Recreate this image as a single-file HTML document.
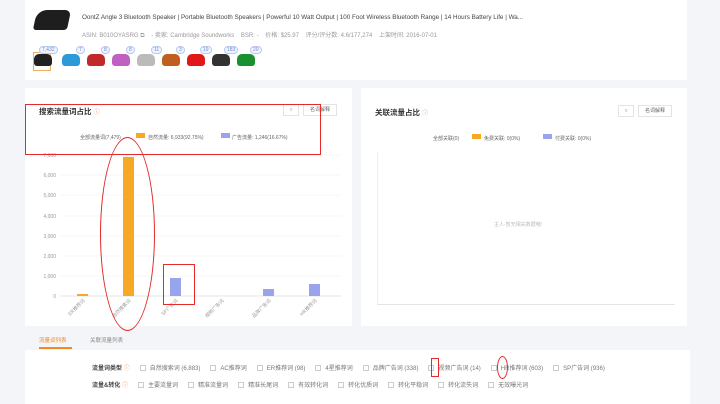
<!DOCTYPE html>
<html><head><meta charset="utf-8"><style>
*{margin:0;padding:0;box-sizing:border-box}
body{width:720px;height:404px;background:#f4f5f8;font-family:"Liberation Sans","Noto Sans CJK SC",sans-serif;position:relative;overflow:hidden;color:#333}
.abs{position:absolute}
.card{position:absolute;background:#fff}
.t{font-size:5px;color:#999;white-space:nowrap;position:absolute}
.thumb{position:absolute;top:54px;width:18px;height:12px;border-radius:5px 5px 3px 3px}
.badge{position:absolute;top:46px;height:8px;border:1px solid #b8c8f0;border-radius:4px;font-size:5px;color:#6f8ad8;background:#f0f4ff;padding:0 2px;line-height:6px}
.btn{position:absolute;border:1px solid #e4e4e4;background:#fff;font-size:5px;color:#666;text-align:center}
.cb{display:inline-block;width:6px;height:6px;border:1px solid #ccc;vertical-align:middle;margin:0 4px 0 10px}
.row{position:absolute;font-size:6px;color:#777;white-space:nowrap}
.red{position:absolute;border:1.5px solid #e52a2a}
.ov{position:absolute;border:1.2px solid #e52a2a;border-radius:50%}
</style></head><body>
<div class="card" style="left:25px;top:0;width:662px;height:80px"></div>
<div class="abs" style="left:35px;top:10px;width:34px;height:20px;background:#1e1e1e;border-radius:10px 6px 3px 3px;transform:skewX(-12deg)"></div>
<div class="t" style="left:82px;top:14px;color:#444;font-size:6.3px">OontZ Angle 3 Bluetooth Speaker | Portable Bluetooth Speakers | Powerful 10 Watt Output | 100 Foot Wireless Bluetooth Range | 14 Hours Battery Life | Wa...</div>
<div class="t" style="left:82px;top:30px;font-size:6px">ASIN: B010OYASRG ⧉ &nbsp;&nbsp; - 卖家: Cambridge Soundworks &nbsp;&nbsp; BSR: - &nbsp;&nbsp; 价格: $25.97 &nbsp;&nbsp; 评分/评分数: 4.6/177,274 &nbsp;&nbsp; 上架时间: 2016-07-01</div>
<div class="abs" style="left:33px;top:52px;width:18px;height:19px;border:1px solid #f0b060"></div>
<div class="thumb" style="left:34px;background:#222"></div><div class="badge" style="left:39px">7,432</div>
<div class="thumb" style="left:62px;background:#2d9ad8"></div><div class="badge" style="left:76px">7</div>
<div class="thumb" style="left:87px;background:#c02a2a"></div><div class="badge" style="left:101px">8</div>
<div class="thumb" style="left:112px;background:#c060c0"></div><div class="badge" style="left:126px">8</div>
<div class="thumb" style="left:137px;background:#bbb"></div><div class="badge" style="left:151px">11</div>
<div class="thumb" style="left:162px;background:#c06020"></div><div class="badge" style="left:176px">3</div>
<div class="thumb" style="left:187px;background:#e01818"></div><div class="badge" style="left:200px">19</div>
<div class="thumb" style="left:212px;background:#333"></div><div class="badge" style="left:224px">183</div>
<div class="thumb" style="left:237px;background:#1a9030"></div><div class="badge" style="left:250px">20</div>

<div class="card" style="left:25px;top:88px;width:327px;height:238px"></div>
<div class="card" style="left:361px;top:88px;width:326px;height:238px"></div>
<div class="abs" style="left:39px;top:106px;font-size:7.5px;color:#333;font-weight:bold">搜索流量词占比 <span style="color:#e8915a;font-weight:normal;font-size:6px">ⓘ</span></div>
<div class="btn" style="left:283px;top:104px;width:16px;height:12px;line-height:10px">○</div>
<div class="btn" style="left:303px;top:104px;width:34px;height:12px;line-height:10px">名词解释</div>
<div class="t" style="left:80px;top:134px;color:#666">全部流量词(7,479)</div>
<div class="abs" style="left:136px;top:133px;width:9px;height:5px;background:#f7a925"></div>
<div class="t" style="left:148px;top:134px;color:#666">自然流量: 6,933(92.75%)</div>
<div class="abs" style="left:221px;top:133px;width:9px;height:5px;background:#9aa4ee"></div>
<div class="t" style="left:232px;top:134px;color:#666">广告流量: 1,246(16.67%)</div>
<svg class="abs" style="left:25px;top:150px" width="327" height="180">
<g stroke="#f0f0f0" stroke-width="0.6">
<line x1="35" x2="316" y1="5" y2="5"/><line x1="35" x2="316" y1="25" y2="25"/><line x1="35" x2="316" y1="45" y2="45"/><line x1="35" x2="316" y1="66" y2="66"/><line x1="35" x2="316" y1="86" y2="86"/><line x1="35" x2="316" y1="106" y2="106"/><line x1="35" x2="316" y1="126" y2="126"/></g>
<line x1="35" x2="316" y1="146" y2="146" stroke="#ddd" stroke-width="0.7"/>
<g font-size="5" fill="#999" text-anchor="end" font-family="Liberation Sans">
<text x="31" y="7">7,000</text><text x="31" y="27">6,000</text><text x="31" y="47">5,000</text><text x="31" y="68">4,000</text><text x="31" y="88">3,000</text><text x="31" y="108">2,000</text><text x="31" y="128">1,000</text><text x="31" y="148">0</text></g>
<rect x="52" y="144" width="11" height="2" fill="#f7a925"/>
<rect x="98" y="7" width="11" height="139" fill="#f7a925"/>
<rect x="145" y="128" width="11" height="18" fill="#9aa4ee"/>
<rect x="238" y="139" width="11" height="7" fill="#9aa4ee"/>
<rect x="284" y="134" width="11" height="12" fill="#9aa4ee"/>
<g font-size="4.8" fill="#999" text-anchor="end" font-family="Liberation Sans,Noto Sans CJK SC">
<text transform="translate(60,151) rotate(-45)">ER推荐词</text>
<text transform="translate(106,151) rotate(-45)">自然搜索词</text>
<text transform="translate(153,151) rotate(-45)">SP广告词</text>
<text transform="translate(199,151) rotate(-45)">视频广告词</text>
<text transform="translate(246,151) rotate(-45)">品牌广告词</text>
<text transform="translate(292,151) rotate(-45)">HR推荐词</text></g>
</svg>
<div class="red" style="left:25px;top:104px;width:296px;height:51px"></div>
<div class="ov" style="left:100px;top:137px;width:55px;height:194px"></div>
<div class="red" style="left:163px;top:264px;width:32px;height:41px"></div>

<div class="abs" style="left:375px;top:107px;font-size:7.5px;color:#333;font-weight:bold">关联流量占比 <span style="color:#e8915a;font-weight:normal;font-size:6px">ⓘ</span></div>
<div class="btn" style="left:618px;top:105px;width:16px;height:12px;line-height:10px">○</div>
<div class="btn" style="left:638px;top:105px;width:34px;height:12px;line-height:10px">名词解释</div>
<div class="t" style="left:433px;top:135px;color:#666">全部关联(0)</div>
<div class="abs" style="left:472px;top:134px;width:9px;height:5px;background:#f7a925"></div>
<div class="t" style="left:484px;top:135px;color:#666">免费关联: 0(0%)</div>
<div class="abs" style="left:543px;top:134px;width:9px;height:5px;background:#9aa4ee"></div>
<div class="t" style="left:555px;top:135px;color:#666">付费关联: 0(0%)</div>
<div class="abs" style="left:377px;top:152px;width:298px;height:153px;border-left:1px solid #eee;border-bottom:1px solid #e4e4e4"></div>
<div class="t" style="left:494px;top:221px;color:#bbb">主人-暂无相关数据哦!</div>

<div class="abs" style="left:39px;top:336px;font-size:5.5px;color:#f08a24">流量词列表</div>
<div class="abs" style="left:39px;top:347px;width:33px;height:1.5px;background:#f08a24"></div>
<div class="abs" style="left:90px;top:336px;font-size:5.5px;color:#888">关联流量列表</div>
<div class="card" style="left:25px;top:350px;width:665px;height:54px"></div>
<div class="row" style="left:92px;top:363px"><b style="color:#444">流量词类型</b> <span style="color:#e8915a">ⓘ</span><span class="cb"></span>自然搜索词 (6,883)<span class="cb"></span>AC推荐词<span class="cb"></span>ER推荐词 (98)<span class="cb"></span>4星推荐词<span class="cb"></span>品牌广告词 (338)<span class="cb"></span>视频广告词 (14)<span class="cb"></span>HR推荐词 (603)<span class="cb"></span>SP广告词 (936)</div>
<div class="row" style="left:92px;top:380px"><b style="color:#444">流量&amp;转化</b> <span style="color:#e8915a">ⓘ</span><span class="cb"></span>主要流量词<span class="cb"></span>精准流量词<span class="cb"></span>精准长尾词<span class="cb"></span>有效转化词<span class="cb"></span>转化优质词<span class="cb"></span>转化平稳词<span class="cb"></span>转化流失词<span class="cb"></span>无效曝光词</div>
<div class="red" style="left:431px;top:358px;width:8px;height:19px"></div>
<div class="ov" style="left:497px;top:356px;width:11px;height:23px"></div>
</body></html>
